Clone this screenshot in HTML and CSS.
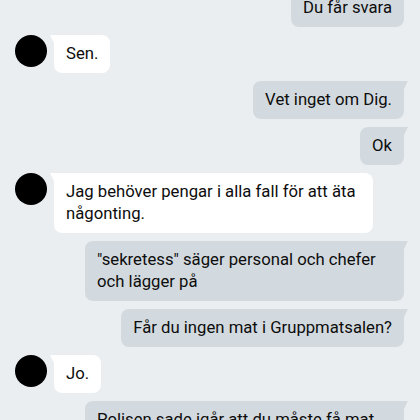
FILE: index.html
```html
<!DOCTYPE html>
<html lang="sv">
<head>
<meta charset="utf-8">
<link rel="stylesheet" href="styles.css">
</head>
<body>
<div class="chat">
  <div class="row out"><div class="bubble">Du får svara</div></div>
  <div class="row in"><div class="avatar"></div><div class="bubble">Sen.</div></div>
  <div class="row out"><div class="bubble">Vet inget om Dig.</div></div>
  <div class="row out"><div class="bubble">Ok</div></div>
  <div class="row in"><div class="avatar"></div><div class="bubble">Jag behöver pengar i alla fall för att äta någonting.</div></div>
  <div class="row out"><div class="bubble">"sekretess" säger personal och chefer och lägger på</div></div>
  <div class="row out"><div class="bubble">Får du ingen mat i Gruppmatsalen?</div></div>
  <div class="row in"><div class="avatar"></div><div class="bubble">Jo.</div></div>
  <div class="row out"><div class="bubble">Polisen sade igår att du måste få mat där.</div></div>
</div>
</body>
</html>
```
FILE: styles.css
```css
html, body {
  margin: 0;
  padding: 0;
  background: #eaeef1;
  overflow: hidden;
}
body {
  width: 420px;
  height: 420px;
  font-family: Roboto, "Noto Sans", sans-serif;
  font-size: 16.7px;
  color: #0d0d0d;
}
.chat {
  display: flex;
  flex-direction: column;
  gap: 8px;
  margin-top: -11px;
  padding: 0 16px 0 15px;
}
.row {
  display: flex;
  align-items: flex-start;
}
.row.out {
  justify-content: flex-end;
}
.row.in {
  gap: 7px;
}
.avatar {
  width: 32px;
  height: 32px;
  border-radius: 50%;
  background: #000;
  flex: none;
}
.bubble {
  position: relative;
  padding: 8px 12px;
  line-height: 22px;
  border-radius: 8px;
  max-width: 295px;
}
.in .bubble {
  background: #fff;
  border-top-left-radius: 0;
}
.out .bubble {
  background: #d3dadf;
  border-top-right-radius: 0;
}
.in .bubble::before {
  content: "";
  position: absolute;
  top: 0;
  left: -4px;
  border-top: 8px solid #fff;
  border-left: 4px solid transparent;
}
.out .bubble::after {
  content: "";
  position: absolute;
  top: 0;
  right: -4px;
  border-top: 8px solid #d3dadf;
  border-right: 4px solid transparent;
}
```
